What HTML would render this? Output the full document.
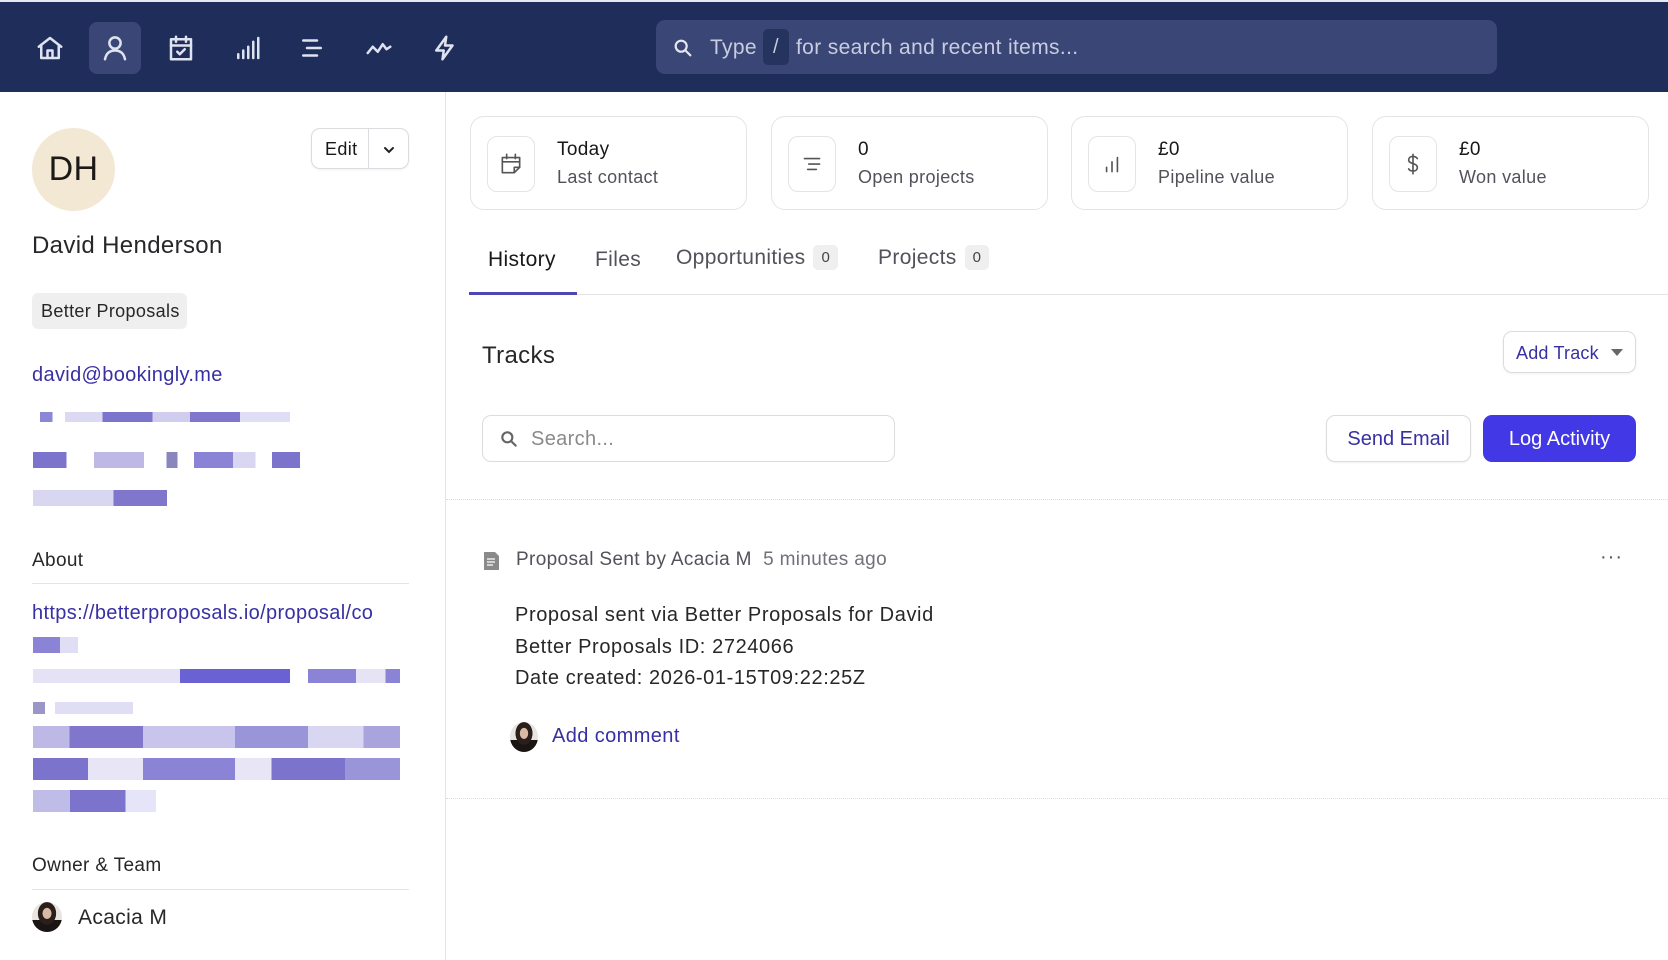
<!DOCTYPE html>
<html><head><meta charset="utf-8"><style>
*{box-sizing:border-box;margin:0;padding:0}
body{width:1668px;height:960px;overflow:hidden;background:#fff;font-family:"Liberation Sans",sans-serif;color:#27272a;position:relative;letter-spacing:.35px}
.a{position:absolute}
.nav{left:0;top:0;width:1668px;height:92px;background:#1f2d5a;border-top:2px solid #e8eaf2}
.ic{position:absolute;top:20px;width:52px;height:52px;display:flex;align-items:center;justify-content:center}
.ic svg{width:30px;height:30px;fill:none;stroke:#dfe3f0;stroke-width:2;stroke-linecap:round;stroke-linejoin:round}
.card{position:absolute;top:116px;height:94px;border:1px solid #e4e4e7;border-radius:14px;background:#fff}
.cib{position:absolute;left:16px;top:19px;width:48px;height:56px;border:1px solid #e4e4e7;border-radius:10px;display:flex;align-items:center;justify-content:center}
.cib svg{width:26px;height:26px;fill:none;stroke:#555;stroke-width:1.5;stroke-linecap:round;stroke-linejoin:round}
.cv{position:absolute;left:86px;top:22px;font-size:19px;color:#18181b}
.cl{position:absolute;left:86px;top:50px;font-size:18px;color:#52525b}
.blur{position:absolute;height:10px}
.tab{position:absolute;top:248px;font-size:21px;color:#52525b}
.badge{display:inline-block;background:#efefef;border-radius:5px;font-size:15px;padding:4px 8px;margin-left:8px;vertical-align:2px;color:#444}
.btn{position:absolute;border:1px solid #dcdce0;border-radius:9px;background:#fff;box-shadow:0 1px 2px rgba(0,0,0,.06)}
.av{position:absolute;border-radius:50%;background:radial-gradient(ellipse at 50% 38%,#d9b9a4 0 20%,#2a1f1c 22% 42%,transparent 44%),linear-gradient(#e8e4e0 60%,#1a1412 60%)}
</style></head><body>
<div class="a nav">
 <div class="ic" style="left:24px"><svg viewBox="0 0 24 24"><path d="M3 11l9-7 9 7"/><path d="M5 9.5V20h14V9.5"/><path d="M10 20v-6h4v6"/></svg></div>
 <div class="ic" style="left:89px;background:#3a4675;border-radius:8px"><svg viewBox="0 0 24 24"><circle cx="12" cy="8" r="4.5"/><path d="M4 21c1-5 4-7 8-7s7 2 8 7"/></svg></div>
 <div class="ic" style="left:155px"><svg viewBox="0 0 24 24"><rect x="4" y="5" width="16" height="16"/><path d="M4 10h16M8 3v4M16 3v4M9 15l2 2 4-4"/></svg></div>
 <div class="ic" style="left:221px"><svg viewBox="0 0 24 24"><path d="M5 20v-3M9 20v-6M13 20v-9M17 20V7M21 20V4"/></svg></div>
 <div class="ic" style="left:286px"><svg viewBox="0 0 24 24"><path d="M5 6h11M8 12h11M5 18h11"/></svg></div>
 <div class="ic" style="left:353px"><svg viewBox="0 0 24 24"><path d="M3 16l4-5 4 4 4-6 3 4 3-2"/></svg></div>
 <div class="ic" style="left:419px"><svg viewBox="0 0 24 24"><path d="M13 3L5 14h6l-1 7 8-11h-6z"/></svg></div>
 <div class="a" style="left:656px;top:18px;width:841px;height:54px;background:#3a4675;border-radius:9px">
  <svg class="a" style="left:16px;top:17px" width="22" height="22" viewBox="0 0 24 24" fill="none" stroke="#e5e7f0" stroke-width="2.4" stroke-linecap="round"><circle cx="10" cy="10" r="6"/><path d="M15 15l5 5"/></svg>
  <div class="a" style="left:54px;top:16px;font-size:21px;color:#c9cde0">Type</div>
  <div class="a" style="left:107px;top:9px;width:26px;height:36px;background:#25335f;border-radius:5px;color:#c9cde0;font-size:20px;text-align:center;line-height:36px">/</div>
  <div class="a" style="left:140px;top:16px;font-size:21px;color:#c9cde0">for search and recent items...</div>
 </div>
</div>
<div class="a" style="left:445px;top:92px;width:1px;height:868px;background:#e4e4e7"></div>
<div class="a" style="left:32px;top:128px;width:83px;height:83px;border-radius:50%;background:#f3e8d4;font-size:34px;color:#1c1917;text-align:center;line-height:83px">DH</div>
<div class="btn" style="left:311px;top:128px;width:98px;height:41px">
 <div class="a" style="left:13px;top:10px;font-size:18px;color:#18181b">Edit</div>
 <div class="a" style="left:56px;top:0;width:1px;height:39px;background:#dcdce0"></div>
 <svg class="a" style="left:69px;top:13px" width="16" height="16" viewBox="0 0 16 16" fill="none" stroke="#222" stroke-width="2" stroke-linecap="round"><path d="M4 6l4 4 4-4"/></svg>
</div>
<div class="a" style="left:32px;top:232px;font-size:24px;color:#27272a">David Henderson</div>
<div class="a" style="left:32px;top:293px;width:155px;height:36px;background:#efefef;border-radius:6px;font-size:18px;line-height:37px;padding-left:9px;color:#27272a">Better Proposals</div>
<div class="a" style="left:32px;top:364px;font-size:20px;color:#3730a3">david@bookingly.me</div>
<div class="blur" style="left:40px;top:412px;width:250px;background:linear-gradient(90deg,#8b86d6 0 5%,#fff 5% 10%,#dcdaf2 10% 25%,#7b74cc 25% 45%,#d0cdef 45% 60%,#8077cc 60% 80%,#e0def4 80%)"></div>
<div class="blur" style="left:33px;top:452px;width:278px;height:16px;background:linear-gradient(90deg,#7c74cc 0 12%,#fff 12% 22%,#bdb8e6 22% 40%,#fff 40% 48%,#8886bc 48% 52%,#fff 52% 58%,#8a83d6 58% 72%,#d8d6f0 72% 80%,#fff 80% 86%,#7c74cc 86% 96%,#fff 96%)"></div>
<div class="blur" style="left:33px;top:490px;width:134px;height:16px;background:linear-gradient(90deg,#d8d6f0 0 60%,#8077cc 60%)"></div>
<div class="a" style="left:32px;top:550px;font-size:19px;color:#27272a">About</div>
<div class="a" style="left:32px;top:583px;width:377px;height:1px;background:#e4e4e7"></div>
<div class="a" style="left:32px;top:602px;font-size:20px;color:#3730a3">https://betterproposals.io/proposal/co</div>
<div class="blur" style="left:33px;top:637px;width:45px;height:16px;background:linear-gradient(90deg,#8a83d6 0 60%,#e0def4 60%)"></div>
<div class="blur" style="left:33px;top:669px;width:367px;height:14px;background:linear-gradient(90deg,#e4e2f4 0 40%,#6a62d2 40% 70%,#fff 70% 75%,#8a83d6 75% 88%,#e6e4f4 88% 96%,#8a83d6 96%)"></div>
<div class="blur" style="left:33px;top:702px;width:100px;height:12px;background:linear-gradient(90deg,#9a96c8 0 12%,#fff 12% 22%,#e0def4 22%)"></div>
<div class="blur" style="left:33px;top:726px;width:367px;height:22px;background:linear-gradient(90deg,#bdb8e6 0 10%,#8077cc 10% 30%,#c8c4ec 30% 55%,#9a94d8 55% 75%,#d8d6f0 75% 90%,#aaa4dc 90%)"></div>
<div class="blur" style="left:33px;top:758px;width:367px;height:22px;background:linear-gradient(90deg,#7c74cc 0 15%,#e8e6f6 15% 30%,#8a83d6 30% 55%,#e8e6f6 55% 65%,#7c74cc 65% 85%,#9a94d8 85%)"></div>
<div class="blur" style="left:33px;top:790px;width:123px;height:22px;background:linear-gradient(90deg,#c0bce8 0 30%,#7c74cc 30% 75%,#e6e4f8 75%)"></div>
<div class="a" style="left:32px;top:855px;font-size:19px;color:#27272a">Owner &amp; Team</div>
<div class="a" style="left:32px;top:889px;width:377px;height:1px;background:#e4e4e7"></div>
<div class="av" style="left:32px;top:902px;width:30px;height:30px"></div>
<div class="a" style="left:78px;top:906px;font-size:21px;color:#27272a">Acacia M</div>
<div class="card" style="left:470px;width:277px"><div class="cib"><svg viewBox="0 0 24 24"><path d="M4 6h16v9l-5 5H4z"/><path d="M4 10h16M8 3v4M16 3v4M15 20v-5h5"/></svg></div><div class="cv">Today</div><div class="cl">Last contact</div></div>
<div class="card" style="left:771px;width:277px"><div class="cib"><svg viewBox="0 0 24 24"><path d="M5 7h14M9 12h10M8 17h8"/></svg></div><div class="cv">0</div><div class="cl">Open projects</div></div>
<div class="card" style="left:1071px;width:277px"><div class="cib"><svg viewBox="0 0 24 24"><path d="M7 19v-4M12 19V10M17 19V6"/></svg></div><div class="cv">£0</div><div class="cl">Pipeline value</div></div>
<div class="card" style="left:1372px;width:277px"><div class="cib"><svg viewBox="0 0 24 24"><path d="M12 3v18M16 7c-1-1.5-2.5-2-4-2-2.5 0-4 1.3-4 3.2 0 4.3 8 2.5 8 7 0 2-1.7 3.3-4 3.3-1.8 0-3.3-.7-4-2"/></svg></div><div class="cv">£0</div><div class="cl">Won value</div></div>
<div class="tab" style="left:488px;color:#18181b">History</div>
<div class="tab" style="left:595px">Files</div>
<div class="tab" style="left:676px;top:245px">Opportunities<span class="badge">0</span></div>
<div class="tab" style="left:878px;top:245px">Projects<span class="badge">0</span></div>
<div class="a" style="left:470px;top:294px;width:1198px;height:1px;background:#e4e4e7"></div>
<div class="a" style="left:469px;top:292px;width:108px;height:3px;background:#4f46b5"></div>
<div class="a" style="left:482px;top:342px;font-size:24px;color:#27272a">Tracks</div>
<div class="btn" style="left:1503px;top:331px;width:133px;height:42px"><div class="a" style="left:12px;top:11px;font-size:18px;color:#3730a3;letter-spacing:.2px">Add Track</div><div class="a" style="left:107px;top:17px;width:0;height:0;border-left:6px solid transparent;border-right:6px solid transparent;border-top:7px solid #666"></div></div>
<div class="a" style="left:482px;top:415px;width:413px;height:47px;border:1px solid #dcdce0;border-radius:9px">
 <svg class="a" style="left:16px;top:13px" width="20" height="20" viewBox="0 0 24 24" fill="none" stroke="#666" stroke-width="2.6" stroke-linecap="round"><circle cx="10" cy="10" r="6"/><path d="M15 15l5 5"/></svg>
 <div class="a" style="left:48px;top:12px;font-size:20px;color:#8a8a8a">Search...</div>
</div>
<div class="btn" style="left:1326px;top:415px;width:145px;height:47px"><div style="text-align:center;line-height:47px;font-size:20px;color:#3730a3;letter-spacing:0">Send Email</div></div>
<div class="a" style="left:1483px;top:415px;width:153px;height:47px;background:#4338e6;border-radius:9px;text-align:center;line-height:48px;font-size:20px;color:#fff;letter-spacing:0">Log Activity</div>
<div class="a" style="left:446px;top:499px;width:1222px;border-top:1px dotted #dcdce0"></div>
<svg class="a" style="left:483px;top:549px" width="17" height="22" viewBox="0 0 17 22"><path d="M1 3h11l4 4v14H1z" fill="#8a8a8a"/><path d="M4 10h8M4 13h8M4 16h6" stroke="#fff" stroke-width="1.3"/></svg>
<div class="a" style="left:516px;top:549px;font-size:19px;color:#52525b">Proposal Sent by Acacia M&nbsp;&nbsp;<span style="color:#71717a">5 minutes ago</span></div>
<div class="a" style="left:1600px;top:546px;font-size:20px;color:#555;letter-spacing:1px">···</div>
<div class="a" style="left:515px;top:600px;font-size:20px;line-height:31.5px;color:#27272a;letter-spacing:.6px">Proposal sent via Better Proposals for David<br>Better Proposals ID: 2724066<br>Date created: 2026-01-15T09:22:25Z</div>
<div class="av" style="left:510px;top:722px;width:28px;height:30px"></div>
<div class="a" style="left:552px;top:725px;font-size:20px;color:#3730a3;letter-spacing:.4px">Add comment</div>
<div class="a" style="left:446px;top:798px;width:1222px;border-top:1px dotted #dcdce0"></div>
</body></html>
